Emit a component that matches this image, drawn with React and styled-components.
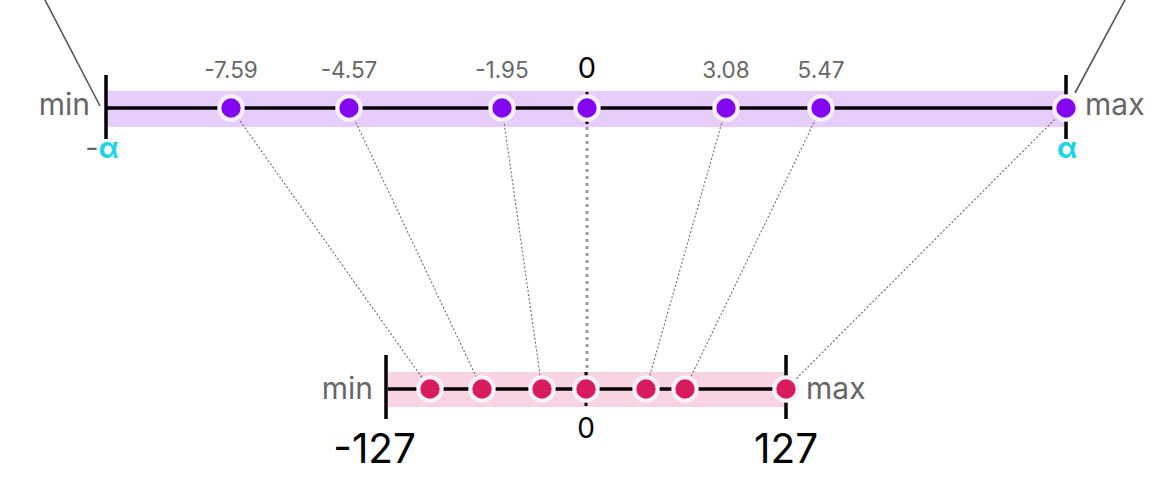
import React from "react";
import styled, { createGlobalStyle } from "styled-components";

const Global = createGlobalStyle`
  html, body { margin: 0; padding: 0; background: #ffffff; }
  body { font-family: Inter, "Noto Sans", sans-serif; }
`;

const Page = styled.main`
  width: 1172px;
  height: 499px;
  overflow: hidden;
  display: flex;
  background: #ffffff;
`;

const Figure = styled.svg`
  display: block;
  width: 1172px;
  height: 499px;
`;

const Band = styled.rect`
  fill: ${(p) => p.$color};
`;

const Axis = styled.line`
  stroke: #050005;
  stroke-width: ${(p) => p.$w || 3.5};
`;

const Guide = styled.line`
  stroke: ${(p) => (p.$thick ? "#9a9a9a" : "#6a6a6a")};
  stroke-width: ${(p) => (p.$thick ? 3 : 1.1)};
  stroke-dasharray: ${(p) => (p.$thick ? "3 4" : "2 2")};
`;

const Slash = styled.line`
  stroke: #555555;
  stroke-width: 1.6;
`;

const Dot = styled.circle`
  fill: ${(p) => p.$color};
  stroke: #fdf2fb;
  stroke-width: 4;
`;

const Label = styled.text`
  font-family: Inter, "Noto Sans", sans-serif;
  font-size: ${(p) => p.$size}px;
  fill: ${(p) => p.$color || "#666666"};
  font-weight: ${(p) => p.$weight || 400};
`;

const Alpha = styled.tspan`
  fill: #22d3e6;
  font-weight: 700;
`;

const PURPLE = "#8405f0";
const PINK = "#d81b5c";

const topY = 108;
const botY = 389;

const topDots = [
  { x: 231, label: "-7.59", to: 430 },
  { x: 349, label: "-4.57", to: 482 },
  { x: 502, label: "-1.95", to: 542 },
  { x: 587, label: null, to: 587 },
  { x: 726, label: "3.08", to: 646 },
  { x: 821, label: "5.47", to: 685 },
  { x: 1066, label: null, to: 786 },
];

export default function App() {
  return (
    <Page>
      <Global />
      <Figure viewBox="0 0 1172 499" xmlns="http://www.w3.org/2000/svg">
        {/* outer slashes */}
        <Slash x1="44" y1="-2" x2="100" y2="106" />
        <Slash x1="1126" y1="-2" x2="1075" y2="93" />

        {/* bands */}
        <Band $color="#e6cdfa" x="107" y="91" width="958" height="36" />
        <Band $color="#f8d3e2" x="388" y="372" width="398" height="35" />

        {/* mapping guides */}
        {topDots.map((d, i) =>
          d.x === 587 ? null : (
            <Guide key={i} x1={d.x} y1={topY} x2={d.to} y2={botY} />
          )
        )}
        <Guide $thick x1="587" y1="120" x2="587" y2="376" />

        {/* axes */}
        <Axis x1="107" y1={topY} x2="1066" y2={topY} />
        <Axis x1="106" y1="75" x2="106" y2="139" />
        <Axis x1="1066" y1="75" x2="1066" y2="139" />
        <Axis x1="587" y1="92" x2="587" y2="124" $w={3} />

        <Axis x1="388" y1={botY} x2="786" y2={botY} />
        <Axis x1="386" y1="355" x2="386" y2="419" />
        <Axis x1="786" y1="355" x2="786" y2="419" />
        <Axis x1="586" y1="372" x2="586" y2="406" $w={3} />

        {/* top dots */}
        {topDots.map((d, i) => (
          <Dot key={i} $color={PURPLE} cx={d.x} cy={topY} r="11.7" />
        ))}
        {topDots.map((d, i) =>
          d.label ? (
            <Label key={i} $size={22.5} x={d.x} y="78" textAnchor="middle">
              {d.label}
            </Label>
          ) : null
        )}
        <Label $size={29} $color="#000000" x="587" y="78" textAnchor="middle">
          0
        </Label>

        {/* bottom dots */}
        {[430, 482, 542, 586, 646, 685, 786].map((x) => (
          <Dot key={x} $color={PINK} cx={x} cy={botY} r="11.7" />
        ))}

        {/* top end labels */}
        <Label $size={30} x="90" y="115" textAnchor="end">
          min
        </Label>
        <Label $size={30} x="1085" y="115">
          max
        </Label>
        <Label $size={29} x="102" y="158" textAnchor="middle">
          -<Alpha>α</Alpha>
        </Label>
        <Label $size={29} x="1067" y="158" textAnchor="middle">
          <Alpha>α</Alpha>
        </Label>

        {/* bottom labels */}
        <Label $size={30} x="373" y="399" textAnchor="end">
          min
        </Label>
        <Label $size={30} x="806" y="399">
          max
        </Label>
        <Label $size={28} $color="#000000" x="586" y="438" textAnchor="middle">
          0
        </Label>
        <Label $size={40.5} $color="#000000" x="416" y="463" textAnchor="end">
          -127
        </Label>
        <Label $size={40.5} $color="#000000" x="786" y="463" textAnchor="middle">
          127
        </Label>
      </Figure>
    </Page>
  );
}
